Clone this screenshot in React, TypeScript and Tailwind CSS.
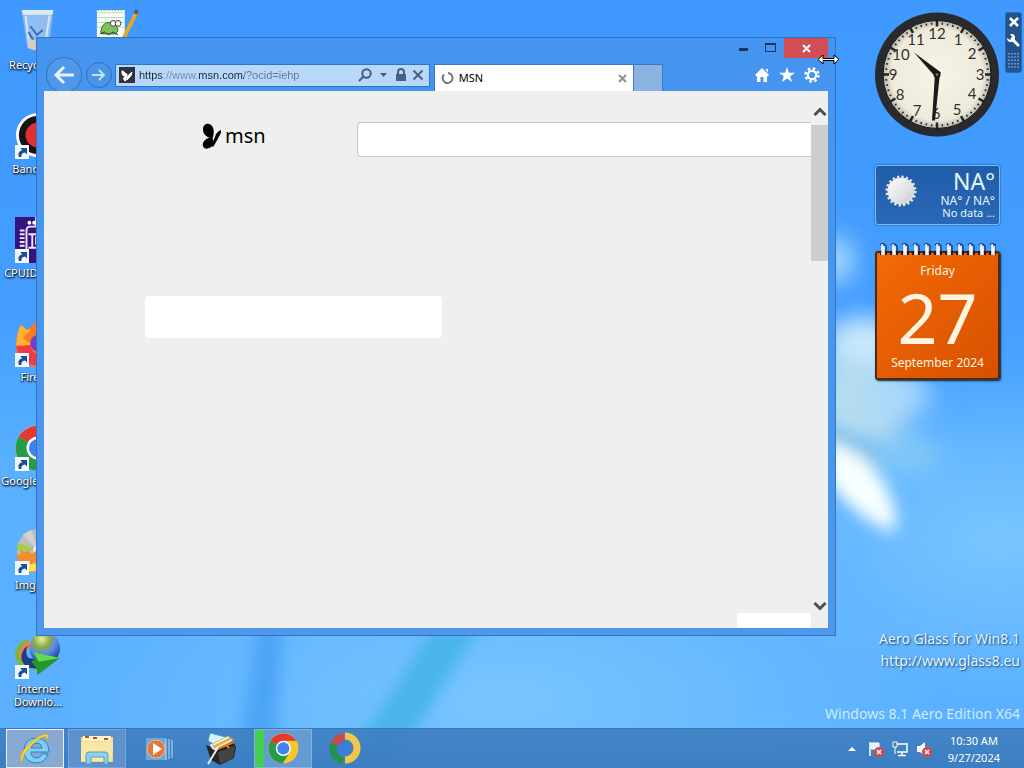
import type { ReactNode } from "react";

function Wallpaper() {
  return (
    <svg
      className="absolute inset-0 h-full w-full"
      viewBox="0 0 1024 768"
      preserveAspectRatio="none"
      aria-hidden="true"
    >
      <defs>
        <linearGradient id="sky" x1="0" y1="0" x2="0" y2="1">
          <stop offset="0" stopColor="#3f99fe" />
          <stop offset="0.4" stopColor="#449dff" />
          <stop offset="0.6" stopColor="#58b0ff" />
          <stop offset="1" stopColor="#5cb1ff" />
        </linearGradient>
        <radialGradient id="glow" cx="0.5" cy="0.5" r="0.5">
          <stop offset="0" stopColor="#80caff" stopOpacity="0.8" />
          <stop offset="1" stopColor="#80caff" stopOpacity="0" />
        </radialGradient>
        <filter id="wide" x="-50%" y="-50%" width="200%" height="200%">
          <feGaussianBlur stdDeviation="12" />
        </filter>
        <filter id="soft" x="-50%" y="-50%" width="200%" height="200%">
          <feGaussianBlur stdDeviation="8" />
        </filter>
      </defs>
      <rect width="1024" height="768" fill="url(#sky)" />
      <ellipse cx="500" cy="700" rx="440" ry="180" fill="url(#glow)" />
      <ellipse cx="1000" cy="540" rx="260" ry="160" fill="url(#glow)" />
      <g filter="url(#wide)">
        <ellipse cx="836" cy="260" rx="18" ry="24" fill="#a5dcfb" />
        <ellipse cx="864" cy="345" rx="40" ry="28" fill="#cbe9fb" />
        <ellipse cx="860" cy="400" rx="54" ry="44" fill="#b4dcf1" />
        <ellipse cx="900" cy="395" rx="30" ry="24" fill="#a9d8fb" />
        <ellipse cx="905" cy="455" rx="36" ry="20" fill="#82c7f8" />
      </g>
      <g filter="url(#soft)">
        <path d="M830 425q28 18 60 30l-20 8q-28-8-40-22z" fill="#83c0e0" />
        <path d="M826 440q46 14 62 50 14 34 4 42-34-12-66-52z" fill="#f7ffff" />
        <path d="M258 620h25l-10 160h-38z" fill="#4ba4f5" />
        <path d="M438 620h45L385 780h-50z" fill="#4ab4ec" />
      </g>
    </svg>
  );
}

function ShortcutArrow() {
  return (
    <svg className="absolute bottom-0 left-0 h-3.5 w-3.5" viewBox="0 0 14 14">
      <path d="M0 0h14v14H0z" fill="#f2f7fc" />
      <path
        d="M4 12C2.500 8.500 4 6 7 5.500L5.500 3H12v6.500l-2-2C7 8 6 9.500 6.500 12z"
        fill="#1d4f98"
      />
    </svg>
  );
}

const art: Record<string, ReactNode> = {
  bin: (
    <>
      <path d="M7 1h33l-5 40q-11 5-22 0z" fill="#a9c9ea" fillOpacity=".75" />
      <path d="M7 1h33l-1 5H8z" fill="#dfeaf5" />
      <path d="M11 7l4 33M36 7l-5 33" stroke="#d8e8f8" strokeWidth="2" />
      <path d="M16 18l7 9 6-5M14 24l5 8" stroke="#3e6cab" strokeWidth="2" fill="none" />
      <path d="M13 31l10 2 11-2-1 10q-9 4-18 0z" fill="#d9cdbf" />
    </>
  ),
  notepad: (
    <>
      <path d="M2 1h29v44H2z" fill="#fafff4" />
      <path d="M2 4h27M2 9h28M2 14h28M2 19h28" stroke="#b8d0bb" />
      <path d="M3 1h25" stroke="#7a8b94" strokeWidth="2" strokeDasharray="1 2" />
      <path d="M6 24q1-10 9-10 7 0 9 8l-2 4H7z" fill="#7fc15d" stroke="#3c6b2c" />
      <circle cx="19" cy="15" r="3" fill="#fff" stroke="#333" />
      <circle cx="24" cy="15" r="3" fill="#fff" stroke="#333" />
      <path d="M5 26l5-2 4 3 5-3 5 3" stroke="#333" fill="none" />
      <path d="M30 30L43 4" stroke="#e9a820" strokeWidth="4" />
      <path d="M42 5l2-4" stroke="#5e5a60" strokeWidth="4" />
    </>
  ),
  bandicam: (
    <>
      <circle cx="24" cy="23" r="23" fill="#fff" />
      <circle cx="24" cy="23" r="20" fill="#151515" />
      <circle cx="24" cy="23" r="13" fill="#e22f34" />
    </>
  ),
  cpu: (
    <>
      <path d="M0 0h48v48H0z" fill="#36147d" />
      <path
        d="M5 14h5M5 18h5M5 22h5M5 26h5M5 30h5M12 38V14q0-4 4-4h6V0M14 18h9M18 18v14M14 32h9M22 20v9"
        stroke="#eee5ff"
        strokeWidth="2"
        fill="none"
      />
      <circle cx="15" cy="6" r="2" fill="#fff" />
      <circle cx="20" cy="6" r="2" fill="#fff" />
    </>
  ),
  firefox: (
    <>
      <path d="M3 12l3-8 6 5 8-5-1-4 9 7q17 3 17 19a22 22 0 01-44 0q0-8 2-14z" fill="#ff7a22" />
      <path d="M3 12l3-8 6 5 5 0-9 9 9 6-9 3q-5-2-7-1z" fill="#ffb22f" />
      <path d="M1 26q5 20 24 21 18-3 20-19-9 11-20 7-9-2-8-10z" fill="#ee3b48" />
      <circle cx="25" cy="23" r="9" fill="#6a43c8" />
    </>
  ),
  chrome: (
    <>
      <circle cx="24" cy="24" r="23.500" fill="#f7c52c" />
      <path d="M24 24L4 12A23.500 23.500 0 0144 12H24z" fill="#e4392d" />
      <path d="M24 24L4 12a23.500 23.500 0 0019 35.500L34 30z" fill="#279b49" />
      <circle cx="24" cy="24" r="12" fill="#fff" />
      <circle cx="24" cy="24" r="9.500" fill="#3f83ec" />
    </>
  ),
  imgburn: (
    <>
      <circle cx="24" cy="22" r="22" fill="#b9bec1" />
      <path d="M24 22L3 14l-1 9z" fill="#a8ce45" />
      <path d="M24 22L8 6l9-5z" fill="#d4d0cc" />
      <circle cx="24" cy="22" r="5" fill="#eee" />
      <path d="M1 26q6 3 5-5 6 6 8 0 3 9 8 1 3 7 8 1l-2 22H8z" fill="#ef8f31" />
      <path d="M12 44q-2-8 3-11 1 7 5 2 4 5 1 9z" fill="#ffe05b" />
    </>
  ),
  idm: (
    <>
      <path d="M14 6Q0 10 0 25q5 15 26 13l-6-9q-11-3-10-13z" fill="#77b83b" />
      <path d="M16 8Q4 12 4 24q2 6 7 8l2-4q-4-8 3-14z" fill="#f08048" />
      <path d="M14 13q-5 6 0 13l20 3-4 9-17-2q-11-8-3-20z" fill="#1e3c88" />
      <circle cx="31" cy="16" r="16" fill="url(#idm-globe)" />
      <path d="M19 20l28 6-24 18v-7l-6-7 5-3z" fill="#26962c" />
      <path d="M19 20l28 6-22 4z" fill="#5fdc4f" />
    </>
  ),
};

const icons = [
  { name: "Recycle Bin", art: "bin", shortcut: false },
  { name: "Bandicam", art: "bandicam", shortcut: true },
  { name: "CPUID CPU-Z", art: "cpu", shortcut: true },
  { name: "Firefox", art: "firefox", shortcut: true },
  { name: "Google Chro...", art: "chrome", shortcut: true },
  { name: "ImgBurn", art: "imgburn", shortcut: true },
  { name: "Internet\nDownlo...", art: "idm", shortcut: true },
];

function DesktopIcon({ name, kind, shortcut }: { name: string; kind: string; shortcut?: boolean }) {
  return (
    <a href="#" className="flex h-[104px] w-[76px] shrink-0 flex-col items-center">
      <span className="relative mb-[3px] block h-[46px] w-[46px] shrink-0">
        <svg className="h-full w-full" viewBox="0 0 48 48" aria-hidden="true">
          <defs>
            <radialGradient id="idm-globe" cx="0.4" cy="0.2" r="0.8">
              <stop offset="0" stopColor="#e8f39b" />
              <stop offset="0.35" stopColor="#8aa845" />
              <stop offset="0.6" stopColor="#5a8bea" />
              <stop offset="1" stopColor="#203a92" />
            </radialGradient>
          </defs>
          {art[kind]}
        </svg>
        {shortcut && <ShortcutArrow />}
      </span>
      <span className="whitespace-pre text-center text-[11px] leading-[13px] text-white [text-shadow:1px_1px_2px_#000,0_1px_2px_#123]">
        {name}
      </span>
    </a>
  );
}

function NavBar() {
  return (
    <div className="flex h-8 items-center px-[2px]">
      <button aria-label="Back" className="flex h-9 w-9 shrink-0 items-center justify-center rounded-full border border-[#2f72be] bg-[#5298e8]">
        <svg width="22" height="20" viewBox="0 0 22 20" fill="none" stroke="#e2f1ff" strokeWidth="3">
          <path d="M21 10H3M11 2L3 10l8 8" />
        </svg>
      </button>
      <button aria-label="Forward" className="ml-1 flex h-[26px] w-[26px] shrink-0 items-center justify-center rounded-full border border-[#2f72be] bg-[#4a94e6]">
        <svg width="14" height="12" viewBox="0 0 14 12" fill="none" stroke="#c4e0ff" strokeWidth="2">
          <path d="M0 6h12M7 1l5 5-5 5" />
        </svg>
      </button>
      <div className="ml-[3px] flex h-[23px] min-w-0 flex-[310] items-center border border-[#3273c4] bg-[#b7d8fb] pl-[3px] pr-1">
        <svg className="shrink-0" width="16" height="16" viewBox="0 0 16 16">
          <path d="M0 0h16v16H0z" fill="#30333a" />
          <path d="M7 7Q2 1 3 6q0 3 3 3-3 3 0 5 2 0 2-7zM8 13q0-5 5-8 0 4-5 8z" fill="#fff" stroke="#fff" />
        </svg>
        <input
          aria-label="Address"
          defaultValue="https://www.msn.com/?ocid=iehp"
          className="ml-1 min-w-0 flex-1 bg-[linear-gradient(to_right,#1c2733_24px,#738ba6_24px,#738ba6_60px,#1c2733_60px,#1c2733_105px,#5f7690_105px)] bg-clip-text font-['Liberation_Sans',sans-serif] text-[11px] leading-4 text-transparent outline-none"
        />
        <button aria-label="Search" className="mr-2">
          <svg width="14" height="14" viewBox="0 0 14 14" fill="none" stroke="#465e7c" strokeWidth="2">
            <circle cx="8.500" cy="5.500" r="4.200" />
            <path d="M5.500 8.500L1 13" />
          </svg>
        </button>
        <button aria-label="Show address list" className="mr-2">
          <svg width="7" height="4" viewBox="0 0 7 4">
            <path d="M0 0h7L3.500 4z" fill="#465e7c" />
          </svg>
        </button>
        <svg className="mr-1" width="12" height="14" viewBox="0 0 12 14">
          <path d="M3 7V4a3 3 0 016 0v3" fill="none" stroke="#4b5f78" strokeWidth="2" />
          <path d="M1 6h10v7H1z" fill="#4b5f78" />
        </svg>
        <button aria-label="Stop" className="px-px">
          <svg width="12" height="12" viewBox="0 0 12 12" stroke="#4b5f78" strokeWidth="2">
            <path d="M1.500 1.500l9 9M10.500 1.500l-9 9" />
          </svg>
        </button>
      </div>
      <div className="ml-1 flex h-full min-w-0 flex-[203] items-end">
        <div className="flex h-[27px] min-w-0 flex-1 items-center border-x border-t border-[#3b78c0] bg-white px-[6px]">
          <svg width="14" height="14" viewBox="0 0 14 14" fill="none" stroke="#777" strokeWidth="2">
            <path d="M3 3.500A5 5 0 107 2" />
          </svg>
          <span className="ml-1 flex-1 text-[11px] leading-4 text-black">MSN</span>
          <button aria-label="Close tab">
            <svg width="9" height="9" viewBox="0 0 9 9" stroke="#8f8f8f" strokeWidth="2">
              <path d="M1 1l7 7M8 1L1 8" />
            </svg>
          </button>
        </div>
      </div>
      <div className="flex h-full w-[29px] shrink-0 items-end">
        <button aria-label="New tab" className="h-[27px] w-full border-r border-t border-[#3b78c0] bg-[#8bb3e2]" />
      </div>
      <div className="ml-auto flex w-[163px] shrink-0 items-center justify-end gap-[9px] pr-[6px]">
        <button aria-label="Home">
          <svg width="16" height="16" viewBox="0 0 16 16" fill="#fff">
            <path d="M8 1l7 7-1.500 1.500L13 9v6H9.500v-5h-3v5H3V9l-.5.500L1 8zM11.500 2H14v4z" />
          </svg>
        </button>
        <button aria-label="Favorites">
          <svg width="16" height="16" viewBox="0 0 16 16" fill="#fff">
            <path d="M8 0l2 5.700h6l-4.800 3.600L13 15l-5-3.500L3 15l1.800-5.700L0 5.700h6z" />
          </svg>
        </button>
        <button aria-label="Tools">
          <svg width="16" height="16" viewBox="0 0 16 16" fill="none" stroke="#fff">
            <circle cx="8" cy="8" r="4.200" strokeWidth="2.200" />
            <circle cx="8" cy="8" r="6.500" strokeWidth="2.400" strokeDasharray="2.550 2.550" />
          </svg>
        </button>
      </div>
    </div>
  );
}

function MsnPage() {
  return (
    <div className="flex min-h-0 flex-1 bg-[#efefef]">
      <div className="flex min-w-0 flex-1 flex-col overflow-hidden">
        <header className="flex items-start pl-[157px] pt-[31px]">
          <a href="#" className="flex w-[156px] shrink-0 items-center gap-1 text-black">
            <svg width="20" height="28" viewBox="0 0 20 28">
              <path d="M10 16C5 15 2 12 2 7c0-4 3-6 6-5 4 1 6 6 4 13zM11 13c2 6 1 12-3 13-4 2-7-1-6-5 1-3 4-5 8-6z" />
              <path d="M12 25l-2-1 4-9c1-4 3-6 6-7l0 3c-2 3-5 10-8 14z" />
            </svg>
            <span className="text-[20px] leading-7">msn</span>
          </a>
          <input aria-label="Search the web" className="h-[35px] min-w-0 flex-1 rounded-l border border-r-0 border-[#c6c6c6] bg-white px-3 outline-none" />
        </header>
        <div className="ml-[101px] mt-[139px] h-[42px] w-[297px] rounded-sm bg-white" />
        <div className="mt-auto h-[15px] w-[74px] self-end bg-white" />
      </div>
      <div className="flex w-[17px] shrink-0 flex-col items-center py-[15px]">
        <button aria-label="Scroll up" className="flex h-[19px] w-full items-start justify-center pt-px">
          <svg width="14" height="9" viewBox="0 0 14 9" fill="none" stroke="#4f4f4f" strokeWidth="3">
            <path d="M1.500 8L7 2.500 12.500 8" />
          </svg>
        </button>
        <div className="h-[136px] w-full bg-[#cdcdcd]" />
        <button aria-label="Scroll down" className="mt-auto flex h-[11px] w-full items-start justify-center">
          <svg width="14" height="9" viewBox="0 0 14 9" fill="none" stroke="#4f4f4f" strokeWidth="3">
            <path d="M1.500 1L7 6.500 12.500 1" />
          </svg>
        </button>
      </div>
    </div>
  );
}

function BrowserWindow() {
  return (
    <section
      aria-label="MSN"
      className="absolute bottom-[92px] left-[36px] right-[188px] top-[37px] flex flex-col border border-[#2f75c6] bg-linear-to-b from-[#4594f0] to-[#4f97e8] px-[7px] pb-[7px]"
    >
      <div className="flex h-[21px] items-start justify-end">
        <button aria-label="Minimize" className="flex h-[19px] w-[27px] items-center justify-center pt-1">
          <span className="h-[3px] w-[9px] bg-[#16355f]" />
        </button>
        <button aria-label="Maximize" className="flex h-[19px] w-[27px] items-center justify-center">
          <span className="h-[9px] w-[11px] border border-t-2 border-[#16355f]" />
        </button>
        <button aria-label="Close" className="flex h-5 w-[44px] items-center justify-center bg-[#d14e54]">
          <svg width="9" height="9" viewBox="0 0 9 9" stroke="#fff" strokeWidth="2">
            <path d="M1 1l7 7M8 1L1 8" />
          </svg>
        </button>
      </div>
      <NavBar />
      <MsnPage />
      {/* horizontal resize pointer over the frame */}
      <svg className="absolute -right-[5px] top-[15px]" width="23" height="13" viewBox="0 0 23 13">
        <path d="M1 6.500L6 2v3.500h11V2l5 4.500-5 4.500V7.500H6V11z" fill="#fff" stroke="#000" />
      </svg>
    </section>
  );
}

const numerals = [
  ["12", 62, 21],
  ["1", 83, 27],
  ["2", 97, 41],
  ["3", 105, 62],
  ["4", 97, 81],
  ["5", 82, 97],
  ["6", 61, 101],
  ["7", 42, 98],
  ["8", 25, 82],
  ["9", 18, 62],
  ["10", 26, 42],
  ["11", 41, 27],
] as const;

function Clock() {
  return (
    <svg className="h-[125px] w-[124px]" viewBox="0 0 124 124" role="img" aria-label="Clock, 10:30">
      <defs>
        <radialGradient id="face">
          <stop offset="0" stopColor="#f7f4e6" />
          <stop offset="0.85" stopColor="#eeebdc" />
          <stop offset="1" stopColor="#b9b7aa" />
        </radialGradient>
      </defs>
      <circle cx="62" cy="62" r="62" fill="#292a2d" />
      <circle cx="62" cy="62" r="54" fill="url(#face)" stroke="#111" />
      {Array.from({ length: 60 }, (_, i) => (
        <line
          key={i}
          x1="62"
          x2="62"
          y1={i % 5 ? 10 : 8}
          y2={i % 5 ? 12 : 14}
          stroke="#222"
          strokeWidth={i % 5 ? 1.5 : 2.5}
          transform={`rotate(${i * 6} 62 62)`}
        />
      ))}
      <g fontSize="15" textAnchor="middle" fill="#33312c" className="font-['Liberation_Sans_Narrow',Lato,sans-serif]">
        {numerals.map(([n, x, y]) => (
          <text key={n} x={x} y={y + 5}>
            {n}
          </text>
        ))}
      </g>
      <path d="M39 40l27 20-5 5z" fill="#1c1a19" />
      <path d="M60 60h5l-5 48h-3z" fill="#1c1a19" />
      <circle cx="62" cy="62" r="3.500" fill="#1c1a19" />
      <circle cx="62" cy="62" r="1.200" fill="#877f72" />
    </svg>
  );
}

function Weather() {
  return (
    <div className="mt-[28px] flex h-[60px] w-[125px] items-start justify-between rounded-[3px] border border-[#7dbcf4] bg-linear-to-b from-[#1f5da9] to-[#2a67b5] pl-2 pr-1 text-right text-[#e5f5ff] shadow-[0_0_2px_#0b386f]">
      <svg className="mt-2 shrink-0" width="34" height="34" viewBox="0 0 34 34">
        <defs>
          <linearGradient id="sun" x1="0" y1="0" x2="1" y2="1">
            <stop offset="0" stopColor="#fff" />
            <stop offset="1" stopColor="#c9ccd0" />
          </linearGradient>
        </defs>
        <circle cx="17" cy="17" r="13.500" fill="url(#sun)" />
        <circle cx="17" cy="17" r="14" fill="none" stroke="#e6e8ea" strokeWidth="3" strokeDasharray="2.200 2.200" />
      </svg>
      <div className="whitespace-nowrap">
        <div className="h-[28px] text-[23px] leading-[30px]">NA°</div>
        <div className="text-[12px] leading-[13px]">NA° / NA°</div>
        <div className="text-[11px] leading-3">No data ...</div>
      </div>
    </div>
  );
}

function Calendar() {
  return (
    <div className="relative mt-[26px] flex h-[129px] w-[125px] flex-col items-center rounded-[3px] border-2 border-[#4c2a18] bg-linear-to-br from-[#f46a07] to-[#d65000] text-[#fff4e0] shadow-[1px_1px_2px_#123]">
      <svg className="absolute -top-[10px] left-[3px]" width="116" height="15" viewBox="0 0 116 15" aria-hidden="true">
        {Array.from({ length: 11 }, (_, i) => (
          <g key={i} transform={`translate(${i * 11} 0)`}>
            <path d="M0 2q3-3 6 1v9" stroke="#27406a" strokeWidth="1.500" fill="none" />
            <path d="M0 8v4M6 8v4" stroke="#171c28" strokeWidth="2" />
            <path d="M2 1v11M2 3l2 9V3" stroke="#f5f7fb" strokeWidth="1.500" fill="none" />
          </g>
        ))}
      </svg>
      <div className="mt-[10px] text-[12px] leading-4">Friday</div>
      <div className="h-[76px] text-[70px] leading-[76px]">27</div>
      <div className="text-[12px] leading-4">September 2024</div>
    </div>
  );
}

function Gadgets() {
  return (
    <aside className="ml-auto flex flex-col items-end">
      <div className="flex gap-[5px] pr-[2px] pt-3">
        <div className="flex flex-col">
          <Clock />
          <Weather />
          <Calendar />
        </div>
        <div className="flex h-[61px] w-[17px] flex-col items-center justify-between rounded-[3px] border border-[#2b69b1] bg-[#23528f] py-1">
          <button aria-label="Close gadget">
            <svg width="10" height="10" viewBox="0 0 10 10" stroke="#fff" strokeWidth="2.500">
              <path d="M1 1l8 8M9 1L1 9" />
            </svg>
          </button>
          <button aria-label="Options">
            <svg width="13" height="13" viewBox="0 0 13 13">
              <path d="M5 5l6 6" stroke="#fff" strokeWidth="3" strokeLinecap="round" />
              <path d="M3 0q5-1 5 4 0 4-4 4-4 0-4-4l3 2 2-1V3z" fill="#fff" />
            </svg>
          </button>
          <svg width="11" height="15" viewBox="0 0 11 15" fill="none" stroke="#7ca6d7" strokeWidth="1.500" strokeDasharray="1.500 1.800">
            <path d="M1 0v15M4 0v15M7 0v15M10 0v15" />
          </svg>
        </div>
      </div>
      <div className="mt-auto pb-[3px] pr-1 text-right text-[14px] leading-[22px] text-[#e6f5ff]">
        <p className="[text-shadow:1px_1px_2px_#123c6c]">Aero Glass for Win8.1</p>
        <p className="[text-shadow:1px_1px_2px_#123c6c]">
          <a href="#">http://www.glass8.eu</a>
        </p>
        <p className="mt-[31px] text-[#cdebff]">Windows 8.1 Aero Edition X64</p>
      </div>
    </aside>
  );
}

function TaskButton({ label, className, children }: { label: string; className?: string; children: ReactNode }) {
  return (
    <button aria-label={label} className={`flex h-[39px] w-[58px] items-center justify-center border ${className ?? "border-transparent"}`}>
      <svg width="34" height="34" viewBox="0 0 34 34">
        {children}
      </svg>
    </button>
  );
}

function Taskbar() {
  return (
    <footer className="relative flex h-10 shrink-0 items-start border-t border-[#3975b9] bg-linear-to-b from-[#3f80c2e8] to-[#3979bde8] pl-[6px]">
      <div className="flex gap-1">
        <TaskButton label="Internet Explorer" className="border-[#e7f0fb] bg-[#88a9d4]">
          <path
            d="M30 22q-3 9-12 9-12-1-12-12Q6 7 18 6q13 1 13 14H13q0 6 6 6 3 0 5-4zM13 16h11q-1-5-5-5t-6 5z"
            fill="#7fd0f2"
            stroke="#2783c6"
          />
          <path d="M4 32Q-1 24 10 13 21 2 29 2q3 1 0 6 0-4-4-3-6 2-13 10Q3 25 4 32z" fill="#f7d43a" stroke="#d19c1e" strokeWidth=".5" />
        </TaskButton>
        <TaskButton label="File Explorer" className="border-[#76a5d8] bg-[#5f92cc]">
          <path d="M1 5h32v25H1z" fill="#eed98d" />
          <path d="M3 4h28v5H3z" fill="#fff5cf" />
          <path d="M5 5h4M13 6h4M24 7h4" stroke="#c84336" strokeWidth="2" />
          <path d="M1 10h32v5l-2 14H1z" fill="#f8e8a4" />
          <path d="M6 32v-9q0-3 3-3h16q3 0 3 3v9h-4v-7H11v7z" fill="#8bd2ef" stroke="#539fc6" />
        </TaskButton>
        <TaskButton label="Windows Media Player">
          <path d="M4 6h20v22H4z" fill="#6ba9dc" />
          <path d="M24 7v21M27 7v20M30 8v18" stroke="#b8dcf4" />
          <circle cx="14" cy="17" r="9" fill="#e57635" stroke="#f4b48e" />
          <path d="M11 11l9 6-9 6z" fill="#fff" />
        </TaskButton>
        <TaskButton label="Toolkit">
          <path d="M6 1l16 4-5 11L4 9z" fill="#d6f2fb" stroke="#3d9acf" />
          <path d="M2 13l8 3 18-9 4 8-2 11-14 7-9-5z" fill="#272522" />
          <path d="M7 12L24 4l6 4-19 11z" fill="#d6aa61" />
          <path d="M9 13l16-8M12 16l16-8" stroke="#fff1c3" strokeWidth="1.500" />
          <path d="M11 18l19-8M22 13l4 4" stroke="#d57d28" strokeWidth="2" />
          <path d="M7 12q1 6 6 5L4 32" stroke="#e9edf2" strokeWidth="2" fill="none" />
          <path d="M14 20l17-6-2 12-13 6z" fill="#454440" />
        </TaskButton>
        <TaskButton label="Google Chrome" className="border-[#86b1df] bg-[linear-gradient(to_right,#45cf52_9px,#649bd2_9px)]">
          <g transform="translate(2 1) scale(.64)">{art.chrome}</g>
        </TaskButton>
        <TaskButton label="Chrome with gold ring">
          <path d="M17 4a12 12 0 010 24" stroke="#f3c647" strokeWidth="7" fill="none" />
          <path d="M15 29A13 13 0 016 11" stroke="#27904f" strokeWidth="7" fill="none" />
          <path d="M7 12a11 11 0 019-7" stroke="#c94a4b" strokeWidth="8" fill="none" />
          <circle cx="16" cy="16" r="6" fill="#377ee0" />
        </TaskButton>
      </div>
      <div className="ml-auto flex h-full items-center pr-6 text-white">
        <button aria-label="Show hidden icons" className="mr-3">
          <svg width="8" height="4" viewBox="0 0 8 4">
            <path d="M0 4l4-4 4 4z" fill="#fff" />
          </svg>
        </button>
        <div className="flex gap-2">
          <svg width="16" height="16" viewBox="0 0 16 16">
            <path d="M2 1v14" stroke="#fff" strokeWidth="1.500" />
            <path d="M3 2h8v6H3z" fill="#e7f1fc" stroke="#fff" />
            <circle cx="11" cy="11" r="5" fill="#dc4545" />
            <path d="M9 9l4 4M13 9l-4 4" stroke="#fff" strokeWidth="1.500" />
          </svg>
          <svg width="16" height="16" viewBox="0 0 16 16" fill="none" stroke="#fff">
            <path d="M5 3h10v8H5M10 11v3M6 14.500h8" strokeWidth="1.500" />
            <path d="M1 1h4v5H1zM3 6v7" fill="#3f73ad" />
          </svg>
          <svg width="16" height="16" viewBox="0 0 16 16">
            <path d="M1 5h3l5-4v14l-5-4H1z" fill="#f6f8fc" />
            <circle cx="11" cy="11" r="5" fill="#dc4545" />
            <path d="M9 9l4 4M13 9l-4 4" stroke="#fff" strokeWidth="1.500" />
          </svg>
        </div>
        <div className="ml-4 mt-px text-center text-[11px] leading-[17px]">
          <div>10:30 AM</div>
          <div>9/27/2024</div>
        </div>
      </div>
    </footer>
  );
}

export default function App() {
  return (
    <div className="relative flex h-screen flex-col overflow-hidden font-['Noto_Sans','Open_Sans',sans-serif]">
      <Wallpaper />
      <main className="relative flex min-h-0 flex-1">
        <div className="flex flex-col pt-[9px]">
          {icons.map((icon) => (
            <DesktopIcon key={icon.name} name={icon.name} kind={icon.art} shortcut={icon.shortcut} />
          ))}
        </div>
        <div className="pl-1 pt-[9px]">
          <DesktopIcon name="Notepad++" kind="notepad" />
        </div>
        <Gadgets />
        <BrowserWindow />
      </main>
      <Taskbar />
    </div>
  );
}
